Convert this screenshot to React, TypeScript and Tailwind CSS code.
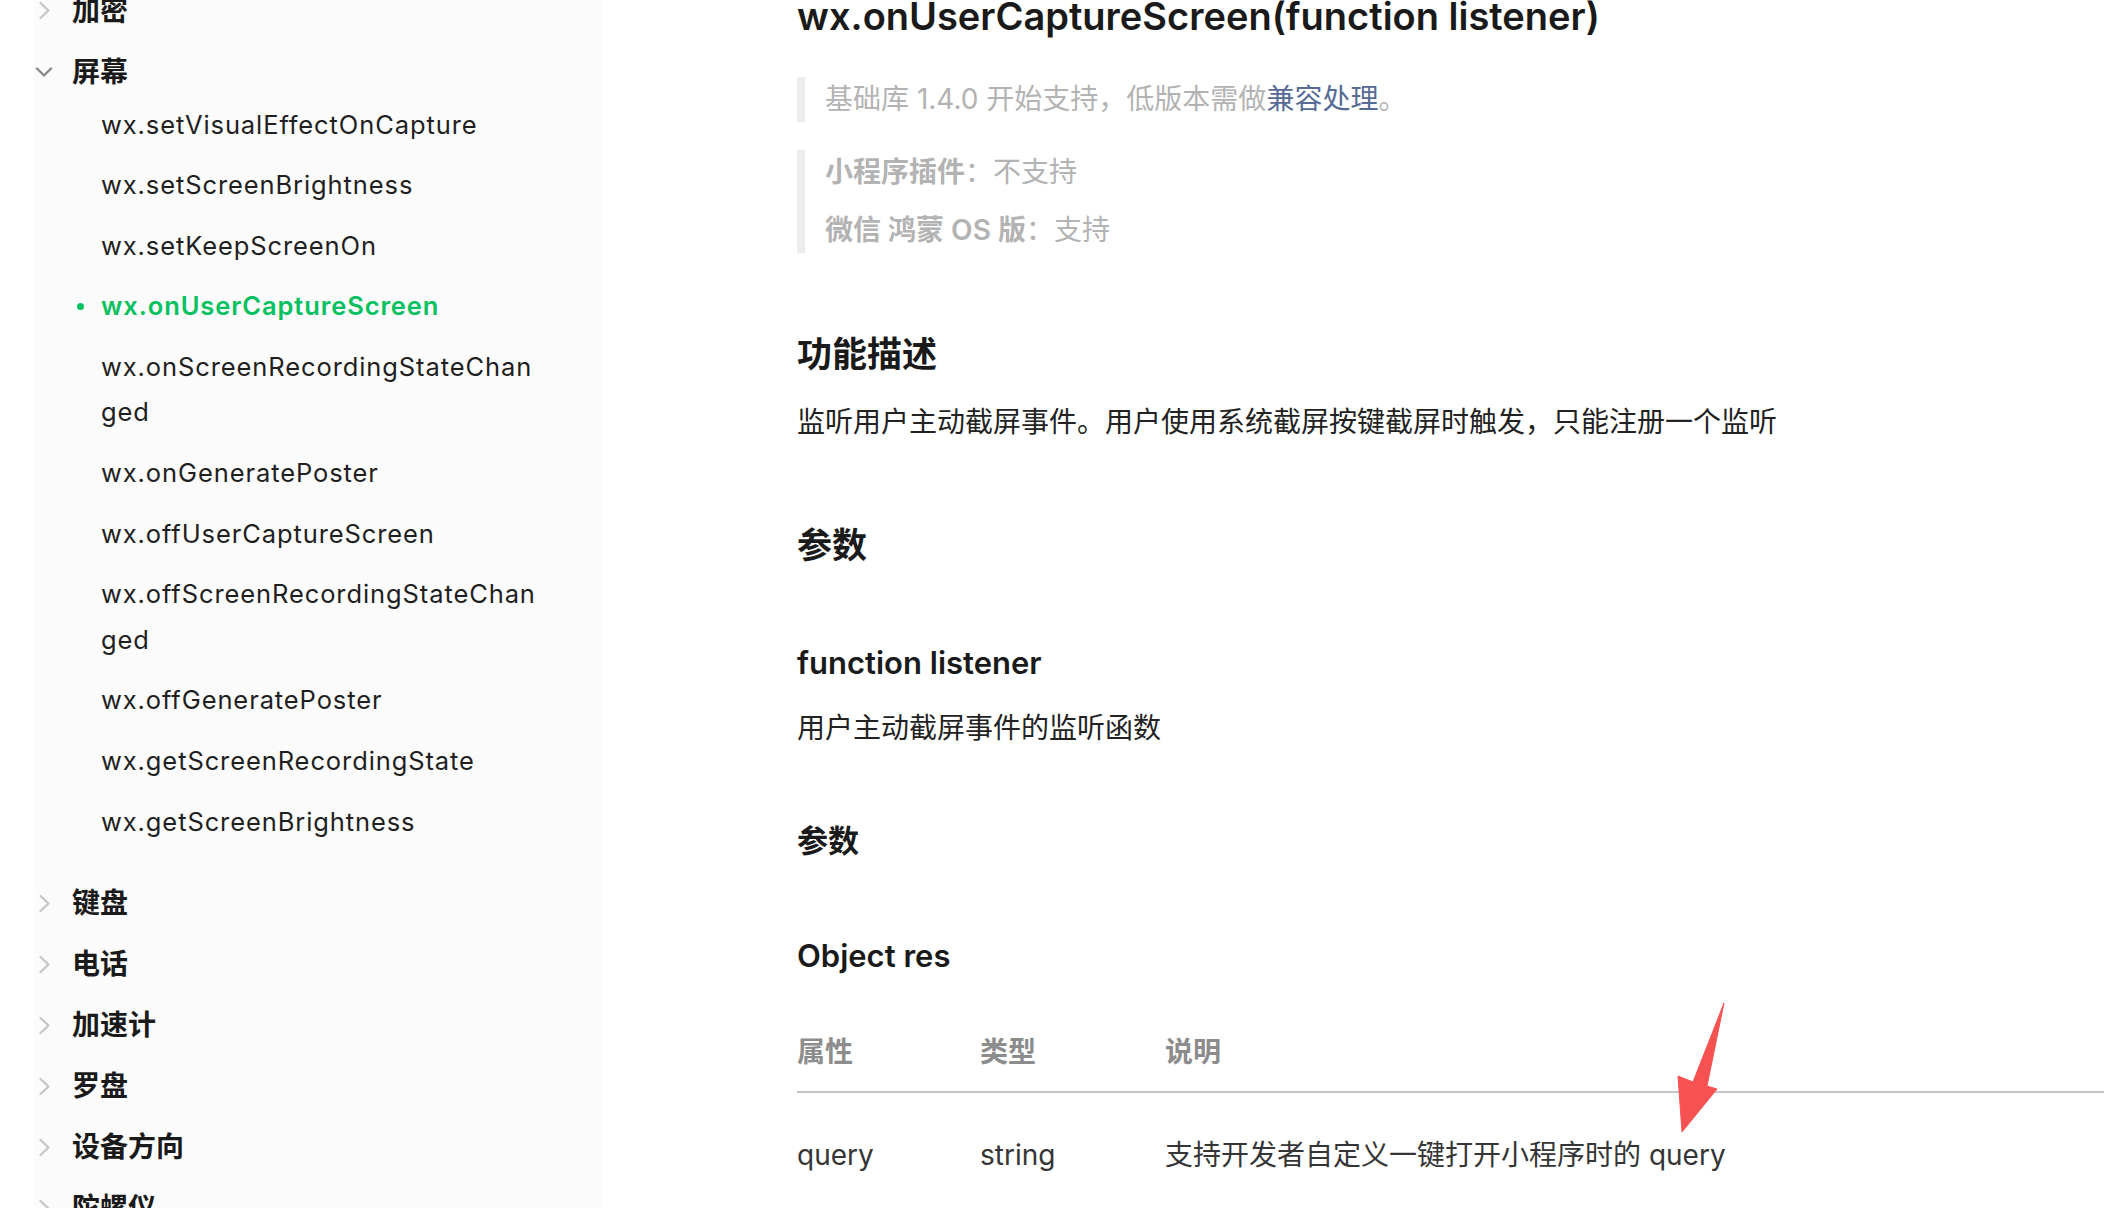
import React from 'react';

const FONT = 'font-["Inter","Noto_Sans_CJK_SC",sans-serif]';

type NavItem = { label: string; wrap?: string; active?: boolean };

const screenItems: NavItem[] = [
  { label: 'wx.setVisualEffectOnCapture' },
  { label: 'wx.setScreenBrightness' },
  { label: 'wx.setKeepScreenOn' },
  { label: 'wx.onUserCaptureScreen', active: true },
  { label: 'wx.onScreenRecordingStateChan', wrap: 'ged' },
  { label: 'wx.onGeneratePoster' },
  { label: 'wx.offUserCaptureScreen' },
  { label: 'wx.offScreenRecordingStateChan', wrap: 'ged' },
  { label: 'wx.offGeneratePoster' },
  { label: 'wx.getScreenRecordingState' },
  { label: 'wx.getScreenBrightness' },
];

const laterGroups = ['键盘', '电话', '加速计', '罗盘', '设备方向', '陀螺仪'];

const ChevronRight = () => (
  <svg width="13" height="19" viewBox="0 0 13 19" fill="none">
    <polyline points="2.5,2 10.5,9.5 2.5,17" stroke="#c6c6c6" strokeWidth="2.3" strokeLinecap="round" strokeLinejoin="round" />
  </svg>
);

const ChevronDown = () => (
  <svg width="18" height="10" viewBox="0 0 18 10" fill="none">
    <polyline points="2,1.5 9,8.5 16,1.5" stroke="#8a8a8a" strokeWidth="2.4" strokeLinecap="round" strokeLinejoin="round" />
  </svg>
);

const GroupHeader: React.FC<{ label: string; open?: boolean }> = ({ label, open }) => (
  <div className="flex items-center h-[61px]">
    <span className="w-[20px] flex justify-center">{open ? <ChevronDown /> : <ChevronRight />}</span>
    <span className="ml-[18px] text-[28px] font-semibold text-[#1a1a1a]">{label}</span>
  </div>
);

const Sidebar = () => (
  <div className="w-[603px] shrink-0 h-full bg-white">
    <div className="ml-[34px] h-full bg-[#fbfbfb] overflow-hidden">
      <div className="mt-[-20px]">
        <GroupHeader label="加密" />
        <GroupHeader label="屏幕" open />
        <div className="mt-[-8px] mb-[21px]">
          {screenItems.map((item) => (
            <div
              key={item.label}
              className={`relative pl-[67px] py-[7.5px] leading-[45.6px] text-[25.5px] tracking-[0.9px] ${
                item.active ? 'text-[#07c160] font-semibold' : 'text-[#1f1f1f]'
              }`}
            >
              {item.active && (
                <span className="absolute left-[43px] top-[27px] w-[7px] h-[7px] rounded-full bg-[#07c160]" />
              )}
              {item.label}
              {item.wrap && (
                <>
                  <br />
                  {item.wrap}
                </>
              )}
            </div>
          ))}
        </div>
        {laterGroups.map((g) => (
          <GroupHeader key={g} label={g} />
        ))}
      </div>
    </div>
  </div>
);

const Arrow = () => (
  <svg className="absolute left-[1053px] top-[992px]" width="80" height="150" viewBox="0 0 80 150">
    <polygon
      points="68,11 51,94 61,97 26,140 22,84 37,90"
      fill="#f65252"
      stroke="#f65252"
      strokeWidth="1"
      strokeLinejoin="round"
    />
  </svg>
);

const Content = () => (
  <div className="relative flex-1 h-full pl-[194px]">
    <div className="mt-[-8px]">
      <h1 className="text-[38px] leading-[48px] font-semibold text-[#1a1a1a]">
        wx.onUserCaptureScreen(function listener)
      </h1>

      <div className="mt-[37px] border-l-[8px] border-[#ececec] pl-[20px] text-[28px] leading-[45px] text-[#b3b3b3]">
        基础库 1.4.0 开始支持，低版本需做<span className="text-[#576b95]">兼容处理</span>。
      </div>

      <div className="mt-[28px] border-l-[8px] border-[#ececec] pl-[20px] text-[28px] leading-[45px] text-[#b3b3b3] flex flex-col gap-[13px]">
        <p>
          <span className="font-semibold">小程序插件</span>：不支持
        </p>
        <p>
          <span className="font-semibold">微信 鸿蒙 OS 版</span>：支持
        </p>
      </div>

      <h2 className="mt-[76px] text-[35px] leading-[50px] font-semibold text-[#1a1a1a]">功能描述</h2>
      <p className="mt-[21px] text-[28px] leading-[45px] text-[#222]">
        监听用户主动截屏事件。用户使用系统截屏按键截屏时触发，只能注册一个监听
      </p>

      <h2 className="mt-[75px] text-[35px] leading-[50px] font-semibold text-[#1a1a1a]">参数</h2>

      <h3 className="mt-[71px] text-[31px] leading-[44px] font-semibold text-[#1a1a1a]">function listener</h3>
      <p className="mt-[21px] text-[28px] leading-[45px] text-[#222]">用户主动截屏事件的监听函数</p>

      <h4 className="mt-[68px] text-[31px] leading-[44px] font-semibold text-[#1a1a1a]">参数</h4>

      <h3 className="mt-[71px] text-[31px] leading-[44px] font-semibold text-[#1a1a1a]">Object res</h3>

      <div className="mt-[35px] text-[28px] leading-[45px]">
        <div className="flex border-b-2 border-[#c4c4c4] pt-[17px] pb-[16px] font-semibold text-[#8c8c8c]">
          <div className="w-[183px]">属性</div>
          <div className="w-[185px]">类型</div>
          <div>说明</div>
        </div>
        <div className="flex pt-[40px] text-[#353535]">
          <div className="w-[183px]">query</div>
          <div className="w-[185px]">string</div>
          <div>支持开发者自定义一键打开小程序时的 query</div>
        </div>
      </div>
    </div>
    <Arrow />
  </div>
);

export default function App() {
  return (
    <div className={`${FONT} flex w-[2104px] h-[1208px] overflow-hidden bg-white antialiased`}>
      <Sidebar />
      <Content />
    </div>
  );
}
